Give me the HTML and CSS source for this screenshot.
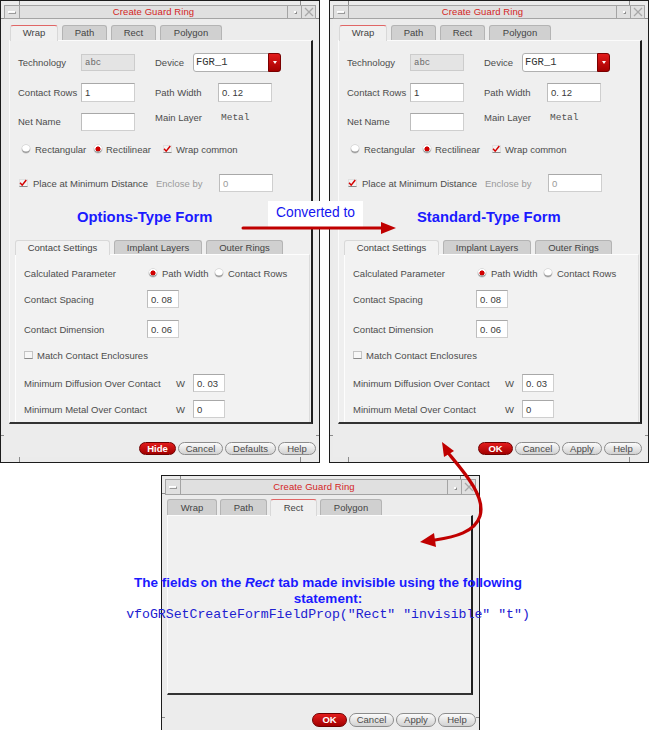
FILE: index.html
```html
<!DOCTYPE html>
<html>
<head>
<meta charset="utf-8">
<link rel="stylesheet" href="styles.css">
</head>
<body>

<div class="win win-left">
  <div class="client">
    <div class="titlebar">
      <span class="tb-menu"><i></i></span>
      <span class="tb-title">Create Guard Ring</span>
      <span class="tb-min"><i></i></span>
      <span class="tb-close"><svg width="10" height="10" viewBox="0 0 10 10"><path d="M1 1 L9 9 M9 1 L1 9" stroke="#a8a8a8" stroke-width="1.3"/></svg></span>
    </div>
    <div class="tabs">
      <span class="tab active t-wrap">Wrap</span>
      <span class="tab t-path">Path</span>
      <span class="tab t-rect">Rect</span>
      <span class="tab t-poly">Polygon</span>
    </div>
    <div class="panel">
      <div class="form">
        <div class="row r1">
          <span class="lbl w63">Technology</span>
          <span class="field dis w54 h17 mono-s">abc</span>
          <span class="lbl w38 gap20">Device</span>
          <span class="combo"><span class="combo-text">FGR_1</span><span class="combo-btn"><i></i></span></span>
        </div>
        <div class="row r2">
          <span class="lbl w63">Contact Rows</span>
          <span class="field w54 h19">1</span>
          <span class="lbl w63 gap20">Path Width</span>
          <span class="field w54 h19">0. 12</span>
        </div>
        <div class="row r3">
          <span class="lbl w63 lh18">Net Name</span>
          <span class="field w54 h18"></span>
          <span class="lbl w66 gap20 top">Main Layer</span>
          <span class="mono-v top">Metal</span>
        </div>
        <div class="row r4">
          <span class="radio ml4"></span>
          <span class="lbl opt w51">Rectangular</span>
          <span class="radio on ml8"></span>
          <span class="lbl opt4 w45">Rectilinear</span>
          <span class="cb on ml12"><svg width="9" height="8" viewBox="0 0 9 8"><path d="M1.2 3.6 L3.6 6.4 L8.2 0.6" stroke="#d40000" stroke-width="1.7" fill="none"/></svg></span>
          <span class="lbl opt4">Wrap common</span>
        </div>
        <div class="row r5">
          <span class="cb on ml1"><svg width="9" height="8" viewBox="0 0 9 8"><path d="M1.2 3.6 L3.6 6.4 L8.2 0.6" stroke="#d40000" stroke-width="1.7" fill="none"/></svg></span>
          <span class="lbl opt w115">Place at Minimum Distance</span>
          <span class="lbl dim w63 ml8">Enclose by</span>
          <span class="field w54 h18 dimtext">0</span>
        </div>
      </div>
      <div class="sub">
        <div class="subtabs">
          <span class="tab active s1">Contact Settings</span>
          <span class="tab s2">Implant Layers</span>
          <span class="tab s3">Outer Rings</span>
        </div>
        <div class="subpanel">
          <div class="row ra">
            <span class="lbl w125">Calculated Parameter</span>
            <span class="radio on"></span>
            <span class="lbl opt w45">Path Width</span>
            <span class="radio ml8"></span>
            <span class="lbl opt">Contact Rows</span>
          </div>
          <div class="row rb">
            <span class="lbl w123">Contact Spacing</span>
            <span class="field w32 h18">0. 08</span>
          </div>
          <div class="row rc">
            <span class="lbl w123">Contact Dimension</span>
            <span class="field w32 h18">0. 06</span>
          </div>
          <div class="row rd">
            <span class="cb"></span>
            <span class="lbl opt4">Match Contact Enclosures</span>
          </div>
          <div class="row re">
            <span class="lbl w152">Minimum Diffusion Over Contact</span>
            <span class="lbl w17">W</span>
            <span class="field w32 h18">0. 03</span>
          </div>
          <div class="row rf">
            <span class="lbl w152">Minimum Metal Over Contact</span>
            <span class="lbl w17">W</span>
            <span class="field w32 h18">0</span>
          </div>
        </div>
      </div>
    </div>
    <div class="buttons">
      <span class="btn red b-hide">Hide</span>
      <span class="btn b-cancel">Cancel</span>
      <span class="btn b-def">Defaults</span>
      <span class="btn b-help">Help</span>
    </div>
  </div>
</div>

<div class="win win-right">
  <div class="client">
    <div class="titlebar">
      <span class="tb-menu"><i></i></span>
      <span class="tb-title">Create Guard Ring</span>
      <span class="tb-min"><i></i></span>
      <span class="tb-close"><svg width="10" height="10" viewBox="0 0 10 10"><path d="M1 1 L9 9 M9 1 L1 9" stroke="#a8a8a8" stroke-width="1.3"/></svg></span>
    </div>
    <div class="tabs">
      <span class="tab active t-wrap">Wrap</span>
      <span class="tab t-path">Path</span>
      <span class="tab t-rect">Rect</span>
      <span class="tab t-poly">Polygon</span>
    </div>
    <div class="panel">
      <div class="form">
        <div class="row r1">
          <span class="lbl w63">Technology</span>
          <span class="field dis w54 h17 mono-s">abc</span>
          <span class="lbl w38 gap20">Device</span>
          <span class="combo"><span class="combo-text">FGR_1</span><span class="combo-btn"><i></i></span></span>
        </div>
        <div class="row r2">
          <span class="lbl w63">Contact Rows</span>
          <span class="field w54 h19">1</span>
          <span class="lbl w63 gap20">Path Width</span>
          <span class="field w54 h19">0. 12</span>
        </div>
        <div class="row r3">
          <span class="lbl w63 lh18">Net Name</span>
          <span class="field w54 h18"></span>
          <span class="lbl w66 gap20 top">Main Layer</span>
          <span class="mono-v top">Metal</span>
        </div>
        <div class="row r4">
          <span class="radio ml4"></span>
          <span class="lbl opt w51">Rectangular</span>
          <span class="radio on ml8"></span>
          <span class="lbl opt4 w45">Rectilinear</span>
          <span class="cb on ml12"><svg width="9" height="8" viewBox="0 0 9 8"><path d="M1.2 3.6 L3.6 6.4 L8.2 0.6" stroke="#d40000" stroke-width="1.7" fill="none"/></svg></span>
          <span class="lbl opt4">Wrap common</span>
        </div>
        <div class="row r5">
          <span class="cb on ml1"><svg width="9" height="8" viewBox="0 0 9 8"><path d="M1.2 3.6 L3.6 6.4 L8.2 0.6" stroke="#d40000" stroke-width="1.7" fill="none"/></svg></span>
          <span class="lbl opt w115">Place at Minimum Distance</span>
          <span class="lbl dim w63 ml8">Enclose by</span>
          <span class="field w54 h18 dimtext">0</span>
        </div>
      </div>
      <div class="sub">
        <div class="subtabs">
          <span class="tab active s1">Contact Settings</span>
          <span class="tab s2">Implant Layers</span>
          <span class="tab s3">Outer Rings</span>
        </div>
        <div class="subpanel">
          <div class="row ra">
            <span class="lbl w125">Calculated Parameter</span>
            <span class="radio on"></span>
            <span class="lbl opt w45">Path Width</span>
            <span class="radio ml8"></span>
            <span class="lbl opt">Contact Rows</span>
          </div>
          <div class="row rb">
            <span class="lbl w123">Contact Spacing</span>
            <span class="field w32 h18">0. 08</span>
          </div>
          <div class="row rc">
            <span class="lbl w123">Contact Dimension</span>
            <span class="field w32 h18">0. 06</span>
          </div>
          <div class="row rd">
            <span class="cb"></span>
            <span class="lbl opt4">Match Contact Enclosures</span>
          </div>
          <div class="row re">
            <span class="lbl w152">Minimum Diffusion Over Contact</span>
            <span class="lbl w17">W</span>
            <span class="field w32 h18">0. 03</span>
          </div>
          <div class="row rf">
            <span class="lbl w152">Minimum Metal Over Contact</span>
            <span class="lbl w17">W</span>
            <span class="field w32 h18">0</span>
          </div>
        </div>
      </div>
    </div>
    <div class="buttons buttons-r">
      <span class="btn red b-ok">OK</span>
      <span class="btn b-cancel">Cancel</span>
      <span class="btn b-apply">Apply</span>
      <span class="btn b-help">Help</span>
    </div>
  </div>
</div>

<div class="win win-bottom">
  <div class="client">
    <div class="titlebar tb-tall">
      <span class="tb-menu"><i></i></span>
      <span class="tb-title">Create Guard Ring</span>
      <span class="tb-min"><i></i></span>
      <span class="tb-close"><svg width="10" height="10" viewBox="0 0 10 10"><path d="M1 1 L9 9 M9 1 L1 9" stroke="#a8a8a8" stroke-width="1.3"/></svg></span>
    </div>
    <div class="tabs tabs-b">
      <span class="tab bt-wrap">Wrap</span>
      <span class="tab bt-path">Path</span>
      <span class="tab active bt-rect">Rect</span>
      <span class="tab bt-poly">Polygon</span>
    </div>
    <div class="panel panel-b"></div>
    <div class="buttons buttons-b">
      <span class="btn red b-ok">OK</span>
      <span class="btn b-cancel">Cancel</span>
      <span class="btn b-apply">Apply</span>
      <span class="btn b-help">Help</span>
    </div>
  </div>
</div>

<div class="conv-box">Converted to</div>

<svg class="overlay" width="650" height="730" viewBox="0 0 650 730">
  <line x1="243" y1="228" x2="384" y2="228" stroke="#c00000" stroke-width="3" stroke-linecap="round"/>
  <polygon points="381,222 396,228 381,234" fill="#c00000"/>
  <path d="M449 454 C 464 472, 486 497, 480 516 C 475 532, 455 537, 435 540" fill="none" stroke="#c00000" stroke-width="3.2" stroke-linecap="round"/>
  <polygon points="442,442 454,451 444,457" fill="#c00000"/>
  <polygon points="420,542 434,533 436,547" fill="#c00000"/>
</svg>

<div class="note note-left">Options-Type Form</div>
<div class="note note-right">Standard-Type Form</div>

<div class="caption">
  <div class="cap-line">The fields on the <em>Rect</em> tab made invisible using the following</div>
  <div class="cap-line">statement:</div>
  <div class="cap-code">vfoGRSetCreateFormFieldProp("Rect" "invisible" "t")</div>
</div>

</body>
</html>
```

FILE: styles.css
```css
* { box-sizing: border-box; }

body {
  margin: 0;
  width: 650px;
  height: 730px;
  position: relative;
  overflow: hidden;
  background: #ffffff;
  font-family: "Liberation Sans", Arial, sans-serif;
}

/* ---------- window frame ---------- */
.win {
  position: absolute;
  border: 1px solid #1c1c1c;
  padding: 4px 3px 5px 3px;
  font-size: 9.5px;
  color: #4c4c4c;
  background:
    linear-gradient(#8c8c8c, #8c8c8c) 18px 0 / 1px 100% no-repeat,
    linear-gradient(#8c8c8c, #8c8c8c) calc(100% - 18px) 0 / 1px 100% no-repeat,
    linear-gradient(#8c8c8c, #8c8c8c) 0 17px / 100% 1px no-repeat,
    linear-gradient(#8c8c8c, #8c8c8c) 0 calc(100% - 26px) / 100% 1px no-repeat,
    #ebebeb;
}
.win-left  { left: 0;     top: 0;     width: 320px; height: 463px; }
.win-right { left: 329px; top: 0;     width: 320px; height: 463px; }
.win-bottom { left: 161px; top: 475px; width: 319px; height: 270px; padding-top: 3px; }

.client {
  height: 100%;
  display: flex;
  flex-direction: column;
  background: #ececec;
}

/* ---------- title bar ---------- */
.titlebar {
  height: 14px;
  flex: none;
  display: flex;
  border: 1px solid #a4a4a4;
  background: #e0e0e0;
}
.tb-tall { height: 16px; }
.tb-menu {
  width: 15px;
  border-right: 1px solid #a4a4a4;
  display: flex;
  align-items: center;
  justify-content: center;
}
.tb-menu i {
  width: 8px;
  height: 3px;
  background: #f6f6f6;
  border: 1px solid #9a9a9a;
  border-top-color: #fff;
  border-left-color: #fff;
}
.tb-title {
  flex: 1;
  text-align: center;
  color: #d42424;
  font-size: 9.5px;
  line-height: 12px;
  letter-spacing: 0.1px;
}
.tb-tall .tb-title { line-height: 14px; }
.tb-min {
  width: 14px;
  border-left: 1px solid #a4a4a4;
  display: flex;
  align-items: flex-end;
  justify-content: flex-end;
  padding: 0 4px 4px 0;
}
.tb-min i {
  width: 3px;
  height: 3px;
  background: #fafafa;
  border: 1px solid #8e8e8e;
  border-top-color: #fff;
  border-left-color: #fff;
}
.tb-close {
  width: 14px;
  border-left: 1px solid #a4a4a4;
  display: flex;
  align-items: center;
  justify-content: center;
}

/* ---------- tabs ---------- */
.tabs {
  display: flex;
  gap: 4px;
  margin: 6px 0 0 6px;
  height: 15px;
  flex: none;
  position: relative;
  z-index: 1;
}
.tab {
  height: 15px;
  border: 1px solid #b4b4b4;
  border-bottom: none;
  border-radius: 3px 3px 0 0;
  background: #d0d0d0;
  color: #444;
  text-align: center;
  line-height: 14px;
  font-size: 9.5px;
  flex: none;
}
.tab.active {
  background: #f0f0f0;
  border-color: #d8d8d8;
  border-top: 1.5px solid #e06666;
  height: 16px;
}
.t-wrap { width: 48px; }
.t-path { width: 45px; }
.t-rect { width: 45px; }
.t-poly { width: 62px; }

.tabs-b { margin: 4px 0 0 2px; height: 16px; gap: 3px; }
.tabs-b .tab { height: 16px; line-height: 15px; }
.tabs-b .tab.active { height: 17px; }
.bt-wrap { width: 50px; }
.bt-path { width: 47px; }
.bt-rect { width: 47px; }
.bt-poly { width: 62px; }

/* ---------- panels ---------- */
.panel {
  margin-left: 5px;
  width: 304px;
  height: 384px;
  flex: none;
  background: #efefef;
  border-top: 1px solid #fbfbfb;
  border-left: 1px solid #fbfbfb;
  border-right: 2px solid #1e1e1e;
  border-bottom: 2px solid #333;
  display: flex;
  flex-direction: column;
}
.panel-b {
  margin-left: 2px;
  width: 306px;
  height: 180px;
  background: #f0f0f0;
}

.form { padding-left: 8px; }

.row {
  display: flex;
  align-items: center;
  flex: none;
}
.r1 { margin-top: 12px; height: 19px; }
.r2 { margin-top: 11px; height: 19px; }
.r3 { margin-top: 11px; height: 18px; align-items: flex-start; }
.r4 { margin-top: 11px; height: 14px; }
.r5 { margin-top: 18px; height: 18px; }

.lbl { flex: none; white-space: nowrap; color: #4c4c4c; }
.lh18 { line-height: 18px; }
.top { line-height: 10px; margin-top: 0; }
.opt { margin-left: 5px; }
.opt4 { margin-left: 4px; }
.dim { color: #9a9a9a; }

.w17 { width: 17px; }
.w38 { width: 38px; }
.w45 { width: 45px; }
.w51 { width: 51px; }
.w63 { width: 63px; }
.w66 { width: 66px; }
.w115 { width: 115px; }
.w123 { width: 123px; }
.w125 { width: 125px; }
.w152 { width: 152px; }
.gap20 { margin-left: 20px; }
.ml1 { margin-left: 1px; }
.ml4 { margin-left: 4px; }
.ml8 { margin-left: 8px; }
.ml12 { margin-left: 12px; }

/* ---------- fields ---------- */
.field {
  flex: none;
  background: #ffffff;
  border: 1px solid #cfcfcf;
  border-top-color: #a8a8a8;
  border-left-color: #bdbdbd;
  color: #3a3a3a;
  font-size: 9.5px;
  padding-left: 3px;
  display: flex;
  align-items: center;
}
.field.w32 { width: 32px; }
.field.w54 { width: 54px; }
.h17 { height: 17px; }
.h18 { height: 18px; }
.h19 { height: 19px; }
.field.dis {
  background: #e4e4e4;
  border-color: #cccccc;
  color: #6a6a6a;
}
.dimtext { color: #9a9a9a; }
.mono-s { font-family: "Liberation Mono", monospace; font-size: 9px; }
.mono-v {
  font-family: "Liberation Mono", monospace;
  font-size: 9.5px;
  color: #505050;
  flex: none;
}

.combo {
  flex: none;
  width: 88px;
  height: 19px;
  display: flex;
  background: #fff;
  border: 1px solid #b0b0b0;
  border-radius: 3px;
}
.combo-text {
  flex: 1;
  font-family: "Liberation Mono", monospace;
  font-size: 10.5px;
  color: #333;
  padding-left: 2px;
  line-height: 17px;
}
.combo-btn {
  width: 13px;
  margin: -1px -1px -1px 0;
  border-radius: 0 3px 3px 0;
  background: linear-gradient(#e21a1a, #a40000);
  border: 1px solid #7a0000;
  display: flex;
  align-items: center;
  justify-content: center;
}
.combo-btn i {
  width: 0;
  height: 0;
  border-left: 2.5px solid transparent;
  border-right: 2.5px solid transparent;
  border-top: 3px solid #fff;
}

/* ---------- radio / check ---------- */
.radio {
  flex: none;
  width: 8px;
  height: 8px;
  border-radius: 50%;
  background: #ffffff;
  box-shadow: inset 0 -1.5px 0 #9a9a9a, 0 0 0 0.5px #c4c4c4;
}
.radio.on {
  background: radial-gradient(circle at 50% 50%, #d00000 0 2.2px, #ffffff 2.9px);
}
.cb {
  flex: none;
  width: 9px;
  height: 8px;
  background: #f7f7f7;
  border: 1px solid #c4c4c4;
  border-bottom: 1.5px solid #8a8a8a;
  display: flex;
}
.cb svg { margin: -1px 0 0 -1px; }
.cb.on { background: #f2f2f2; border-color: #e0e0e0; border-bottom-color: #8a8a8a; }

/* ---------- sub tabs ---------- */
.sub {
  margin: 48px 1px 0 5px;
  flex: 1;
  display: flex;
  flex-direction: column;
}
.subtabs {
  display: flex;
  gap: 4px;
  height: 14px;
  flex: none;
  position: relative;
  z-index: 1;
}
.subtabs .tab { height: 14px; line-height: 13px; }
.subtabs .tab.active {
  height: 15px;
  border-top: 1px solid #d8d8d8;
  background: #f2f2f2;
}
.s1 { width: 95px; }
.s2 { width: 88px; }
.s3 { width: 77px; }

.subpanel {
  flex: 1;
  background: #f2f2f2;
  border-top: 1px solid #fdfdfd;
  border-left: 1px solid #fdfdfd;
  border-right: 1px solid #dcdcdc;
  padding-left: 8px;
}
.ra { margin-top: 11px; height: 14px; }
.rb { margin-top: 10px; height: 18px; }
.rc { margin-top: 12px; height: 18px; }
.rd { margin-top: 10px; height: 14px; }
.re { margin-top: 12px; height: 18px; }
.rf { margin-top: 8px; height: 18px; }

/* ---------- buttons ---------- */
.buttons {
  display: flex;
  justify-content: flex-end;
  gap: 2px;
  margin-top: 18px;
  flex: none;
}
.buttons-r { margin-right: 3px; }
.buttons-b { margin-top: 18px; }
.btn {
  height: 13px;
  border: 1px solid #8c8c8c;
  border-radius: 7px;
  background: linear-gradient(#fbfbfb, #d2d2d2);
  color: #4a4a4a;
  text-align: center;
  font-size: 9.5px;
  line-height: 11px;
  flex: none;
}
.buttons-b .btn { height: 14px; line-height: 12px; }
.btn.red {
  background: linear-gradient(#e31c1c, #a20000);
  border-color: #6e0000;
  color: #ffffff;
  font-weight: bold;
}
.b-hide { width: 37px; }
.b-ok { width: 35px; }
.b-cancel { width: 45px; }
.b-def { width: 51px; }
.b-apply { width: 40px; }
.b-help { width: 38px; }

/* ---------- annotations ---------- */
.conv-box {
  position: absolute;
  left: 268px;
  top: 201px;
  width: 95px;
  height: 26px;
  background: #ffffff;
  color: #1414f0;
  font-size: 13.8px;
  line-height: 24px;
  text-align: center;
}
.overlay {
  position: absolute;
  left: 0;
  top: 0;
  pointer-events: none;
}
.note {
  position: absolute;
  top: 208px;
  color: #1a1aff;
  font-weight: bold;
  font-size: 14.8px;
  line-height: 18px;
  white-space: nowrap;
}
.note-left { left: 77px; }
.note-right { left: 417px; }

.caption {
  position: absolute;
  left: 80px;
  top: 575px;
  width: 496px;
  text-align: center;
  color: #1a1aff;
}
.cap-line {
  font-weight: bold;
  font-size: 13.5px;
  line-height: 16px;
}
.cap-line em { font-style: italic; }
.cap-code {
  font-family: "Liberation Mono", "Courier New", monospace;
  font-size: 13.2px;
  line-height: 15px;
  color: #2020d0;
  white-space: nowrap;
}
```
